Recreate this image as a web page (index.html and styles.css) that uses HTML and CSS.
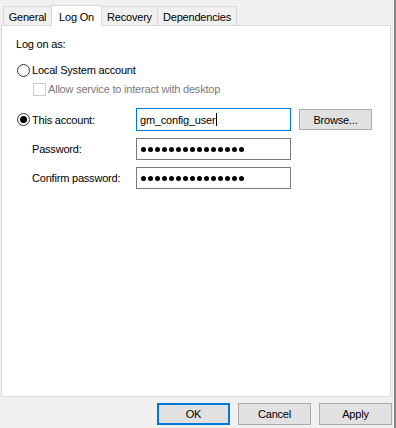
FILE: index.html
```html
<!DOCTYPE html>
<html>
<head>
<meta charset="utf-8">
<link rel="stylesheet" href="styles.css">
</head>
<body>
<div class="window">
  <div class="tabs">
    <div class="tab">General</div>
    <div class="tab active">Log On</div>
    <div class="tab">Recovery</div>
    <div class="tab">Dependencies</div>
  </div>
  <div class="panel">
    <div class="heading">Log on as:</div>
    <div class="option first"><span class="radio"></span><span>Local System account</span></div>
    <div class="check-row"><span class="checkbox"></span><span>Allow service to interact with desktop</span></div>
    <div class="form">
      <div class="option"><span class="radio checked"></span><span>This account:</span></div>
      <div class="field focused"><span>gm_config_user</span><span class="caret"></span></div>
      <div class="btn browse">Browse...</div>
      <div class="label">Password:</div>
      <div class="field"><span class="dots"><i></i><i></i><i></i><i></i><i></i><i></i><i></i><i></i><i></i><i></i><i></i><i></i><i></i><i></i><i></i></span></div>
      <div></div>
      <div class="label">Confirm password:</div>
      <div class="field"><span class="dots"><i></i><i></i><i></i><i></i><i></i><i></i><i></i><i></i><i></i><i></i><i></i><i></i><i></i><i></i><i></i></span></div>
      <div></div>
    </div>
  </div>
  <div class="footer">
    <div class="btn default">OK</div>
    <div class="btn">Cancel</div>
    <div class="btn">Apply</div>
  </div>
</div>
</body>
</html>
```
FILE: styles.css
```css
* { box-sizing: border-box; }
html, body { margin: 0; padding: 0; }
body {
  background: #f0f0f0;
  font-family: "Liberation Sans", Arial, sans-serif;
  font-size: 11px;
  letter-spacing: -0.2px;
  color: #000;
}
.window {
  width: 396px;
  height: 428px;
  border-right: 2px solid #8a8a8a;
  display: flex;
  flex-direction: column;
  overflow: hidden;
}
.tabs {
  height: 26px;
  padding-left: 3px;
  display: flex;
  align-items: flex-end;
}
.tab {
  height: 19px;
  margin-bottom: 1px;
  margin-left: -1px;
  border: 1px solid #d9d9d9;
  border-bottom: none;
  background: #f0f0f0;
  display: flex;
  align-items: center;
  justify-content: center;
  padding-top: 2px;
}
.tab:first-child { margin-left: 0; width: 49px; }
.tab:nth-child(2) { width: 51px; }
.tab:nth-child(3) { width: 57px; }
.tab:nth-child(4) { width: 80px; }
.tab.active {
  height: 21px;
  margin-bottom: 0;
  background: #fff;
  position: relative;
  z-index: 1;
  padding-top: 1px;
}
.panel {
  margin-top: -1px;
  margin-left: 1px;
  width: 390px;
  height: 372px;
  background: #fff;
  border: 1px solid #d9d9d9;
  padding: 12px 0 0 14px;
}
.heading { line-height: 13px; height: 13px; }
.option {
  display: flex;
  align-items: center;
  height: 14px;
}
.option.first { margin-top: 12px; }
.radio {
  width: 13px;
  height: 13px;
  margin-left: 1px;
  margin-right: 2px;
  border: 1px solid #333;
  border-radius: 50%;
  background: #fff;
  display: flex;
  align-items: center;
  justify-content: center;
  flex: none;
}
.radio.checked::after {
  content: "";
  width: 7px;
  height: 7px;
  border-radius: 50%;
  background: #000;
}
.check-row {
  margin-top: 5px;
  height: 14px;
  display: flex;
  align-items: center;
  padding-left: 17px;
  color: #7a7a7a;
}
.checkbox {
  width: 13px;
  height: 13px;
  border: 1px solid #cccccc;
  background: #fff;
  margin-right: 2px;
  flex: none;
}
.form {
  margin-top: 12px;
  display: grid;
  grid-template-columns: 112px 155px 73px;
  grid-template-rows: 23px 22px 22px;
  column-gap: 8px;
  row-gap: 7px;
}
.form .option { height: auto; }
.label {
  display: flex;
  align-items: center;
  padding-left: 16px;
}
.field {
  border: 1px solid #7a7a7a;
  background: #fff;
  display: flex;
  align-items: center;
  padding-left: 3px;
}
.field.focused { border-color: #0078d7; }
.caret {
  display: inline-block;
  width: 1px;
  height: 13px;
  background: #000;
  margin-left: 1px;
}
.dots {
  display: flex;
  gap: 2px;
  padding-left: 1px;
}
.dots i {
  display: block;
  width: 5px;
  height: 5px;
  border-radius: 50%;
  background: #000;
}
.btn {
  height: 22px;
  width: 73px;
  background: #e1e1e1;
  border: 1px solid #adadad;
  display: flex;
  align-items: center;
  justify-content: center;
}
.btn.browse {
  height: 21px;
  margin-top: 1px;
}
.btn.default { border: 2px solid #0078d7; }
.footer {
  display: flex;
  justify-content: flex-end;
  gap: 8px;
  padding: 6px 2px 0 0;
}
```
